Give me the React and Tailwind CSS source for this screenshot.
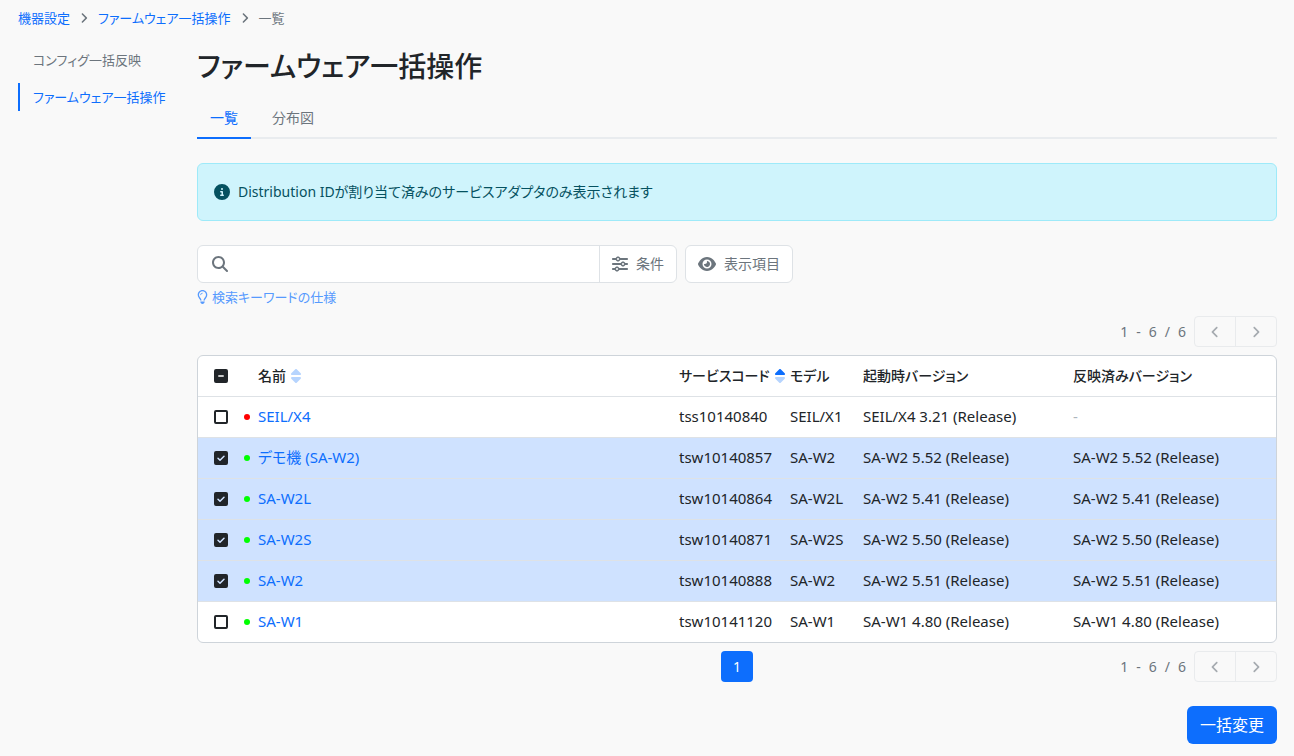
import { useEffect, useRef, useState } from 'react';
import {
  FaAngleLeft,
  FaAngleRight,
  FaCircleInfo,
  FaEye,
  FaMagnifyingGlass,
  FaRegLightbulb,
  FaSliders,
  FaSortDown,
  FaSortUp,
} from 'react-icons/fa6';

const sideNav = [
  { label: 'コンフィグ一括反映', active: false },
  { label: 'ファームウェア一括操作', active: true },
];

const tabs = [
  { label: '一覧', active: true },
  { label: '分布図', active: false },
];

const devices = [
  { name: 'SEIL/X4', code: 'tss10140840', model: 'SEIL/X1', running: 'SEIL/X4 3.21 (Release)', applied: null, online: false },
  { name: 'デモ機 (SA-W2)', code: 'tsw10140857', model: 'SA-W2', running: 'SA-W2 5.52 (Release)', applied: 'SA-W2 5.52 (Release)', online: true },
  { name: 'SA-W2L', code: 'tsw10140864', model: 'SA-W2L', running: 'SA-W2 5.41 (Release)', applied: 'SA-W2 5.41 (Release)', online: true },
  { name: 'SA-W2S', code: 'tsw10140871', model: 'SA-W2S', running: 'SA-W2 5.50 (Release)', applied: 'SA-W2 5.50 (Release)', online: true },
  { name: 'SA-W2', code: 'tsw10140888', model: 'SA-W2', running: 'SA-W2 5.51 (Release)', applied: 'SA-W2 5.51 (Release)', online: true },
  { name: 'SA-W1', code: 'tsw10141120', model: 'SA-W1', running: 'SA-W1 4.80 (Release)', applied: 'SA-W1 4.80 (Release)', online: true },
];

function Checkbox({ checked, indeterminate = false, onChange, label }) {
  const ref = useRef(null);
  useEffect(() => {
    ref.current.indeterminate = indeterminate;
  }, [indeterminate]);

  const filled = checked || indeterminate;
  return (
    <span className="relative block h-3.5 w-3.5">
      <input
        ref={ref}
        type="checkbox"
        aria-label={label}
        checked={checked}
        onChange={onChange}
        className={`block h-3.5 w-3.5 appearance-none rounded-xs border-2 border-[#212529] ${filled ? 'bg-[#212529]' : ''}`}
      />
      {filled && (
        <svg
          viewBox="0 0 14 14"
          fill="none"
          stroke="currentColor"
          strokeWidth="1.5"
          strokeLinecap="round"
          strokeLinejoin="round"
          className={`pointer-events-none absolute inset-0 h-3.5 w-3.5 ${indeterminate ? 'text-white' : 'text-[#cfe2ff]'}`}
        >
          <path d={indeterminate ? 'M4.8 7h4.4' : 'M4 7.2l2 2 4-4'} />
        </svg>
      )}
    </span>
  );
}

function SortButton({ children, direction }) {
  return (
    <button type="button" className="flex items-center gap-1 font-medium whitespace-nowrap">
      {children}
      <span className="relative block h-4 w-3">
        <FaSortUp className={`absolute inset-0 h-4 w-3 ${direction === 'asc' ? 'text-[#0d6efd]' : 'text-[#b6d4fe]'}`} />
        <FaSortDown className="absolute inset-0 h-4 w-3 text-[#b6d4fe]" />
      </span>
    </button>
  );
}

function Pager() {
  return (
    <div className="flex items-center gap-2 text-[#6c757d]">
      <span className="flex gap-2 text-sm">
        <span>1</span>
        <span>-</span>
        <span>6</span>
        <span>/</span>
        <span>6</span>
      </span>
      <div className="flex h-[31px] divide-x divide-[#e9ebed] rounded border border-[#e9ebed] text-[#a6abb0]">
        <button type="button" disabled aria-label="前へ" className="flex w-[41px] items-center justify-center">
          <FaAngleLeft className="h-3.5 w-3.5" />
        </button>
        <button type="button" disabled aria-label="次へ" className="flex w-10 items-center justify-center">
          <FaAngleRight className="h-3.5 w-3.5" />
        </button>
      </div>
    </div>
  );
}

export default function App() {
  const [selected, setSelected] = useState([1, 2, 3, 4]);
  const allSelected = selected.length === devices.length;

  const toggle = (i) =>
    setSelected((prev) => (prev.includes(i) ? prev.filter((n) => n !== i) : [...prev, i]));

  return (
    <div className="min-h-screen bg-[#f9f9f9] pt-2 pr-[17px] pb-3 pl-[18px] font-['Noto_Sans','Noto_Sans_CJK_JP',sans-serif] text-sm text-[#212529] [font-feature-settings:'palt']">
      <nav aria-label="breadcrumb" className="flex h-5 items-center gap-2.5 text-[13px] text-[#6c757d]">
        <a href="#" className="text-[#0d6efd]">機器設定</a>
        <FaAngleRight className="h-3.5 w-2" />
        <a href="#" className="text-[#0d6efd]">ファームウェア一括操作</a>
        <FaAngleRight className="h-3.5 w-2" />
        <span>一覧</span>
      </nav>

      <div className="mt-[18px] flex">
        <nav className="flex w-[179px] shrink-0 flex-col gap-[9px] text-[13px]">
          {sideNav.map(({ label, active }) => (
            <a
              key={label}
              href="#"
              className={`flex h-7 items-center border-l-2 pl-[13px] ${
                active ? 'border-[#0d6efd] text-[#0d6efd]' : 'border-transparent text-[#6c757d]'
              }`}
            >
              {label}
            </a>
          ))}
        </nav>

        <main className="min-w-0 flex-1">
          <h1 className="text-[28px] leading-10 font-medium">ファームウェア一括操作</h1>

          <div className="mt-3 flex gap-2 border-b-2 border-[#e9ecef]">
            {tabs.map(({ label, active }) => (
              <a
                key={label}
                href="#"
                className={`-mb-0.5 flex h-[41px] items-center border-b-2 px-[13px] ${
                  active ? 'border-[#0d6efd] text-[#0d6efd]' : 'border-transparent text-[#6c757d]'
                }`}
              >
                {label}
              </a>
            ))}
          </div>

          <div className="mt-6 flex h-[58px] items-center gap-2 rounded-md border border-[#9eeaf9] bg-[#cff4fc] px-4 text-sm text-[#055160]">
            <FaCircleInfo className="h-4 w-4" />
            Distribution IDが割り当て済みのサービスアダプタのみ表示されます
          </div>

          <div className="mt-6 flex gap-2 text-[#6c757d]">
            <div className="flex h-[38px] w-[480px] rounded-md border border-[#dee2e6] bg-white">
              <label className="flex flex-1 items-center gap-2 pl-3.5">
                <FaMagnifyingGlass className="h-4 w-4" />
                <input type="search" aria-label="検索" className="min-w-0 flex-1 outline-none" />
              </label>
              <button type="button" className="flex items-center gap-2 border-l border-[#dee2e6] px-3">
                <FaSliders className="h-4 w-4" />
                条件
              </button>
            </div>
            <button type="button" className="flex h-[38px] items-center gap-2 rounded-md border border-[#dee2e6] bg-white px-3">
              <FaEye className="h-[18px] w-[18px]" />
              表示項目
            </button>
          </div>

          <a href="#" className="mt-1 flex h-5 w-fit items-center gap-1 text-[13px] text-[#569afe]">
            <FaRegLightbulb className="h-3.5 w-[11px]" />
            検索キーワードの仕様
          </a>

          <div className="mt-[9px] flex justify-end">
            <Pager />
          </div>

          <div className="mt-2 overflow-hidden rounded-md border border-[#ced4da] bg-white">
            <table className="w-full table-fixed text-left text-[15px]">
              <colgroup>
                <col className="w-10" />
                <col className="w-5" />
                <col />
                <col className="w-[111px]" />
                <col className="w-[73px]" />
                <col className="w-[210px]" />
                <col className="w-[203px]" />
              </colgroup>
              <thead>
                <tr className="h-10 border-b border-[#dee2e6] text-sm">
                  <th className="pl-4">
                    <Checkbox
                      label="すべて選択"
                      checked={allSelected}
                      indeterminate={selected.length > 0 && !allSelected}
                      onChange={() => setSelected(allSelected ? [] : devices.map((_, i) => i))}
                    />
                  </th>
                  <td />
                  <th><SortButton>名前</SortButton></th>
                  <th><SortButton direction="asc">サービスコード</SortButton></th>
                  <th className="font-medium">モデル</th>
                  <th className="font-medium">起動時バージョン</th>
                  <th className="font-medium">反映済みバージョン</th>
                </tr>
              </thead>
              <tbody>
                {devices.map((device, i) => (
                  <tr
                    key={device.code}
                    className={`h-[41px] border-b border-[#dee2e6] last:border-b-0 ${
                      selected.includes(i) ? 'bg-[#cfe2ff]' : ''
                    }`}
                  >
                    <td className="pl-4">
                      <Checkbox label={device.name} checked={selected.includes(i)} onChange={() => toggle(i)} />
                    </td>
                    <td className="pl-1.5">
                      <span className={`block h-1.5 w-1.5 rounded-full ${device.online ? 'bg-[#00ff00]' : 'bg-[#ff0000]'}`} />
                    </td>
                    <td><a href="#" className="text-[#0d6efd]">{device.name}</a></td>
                    <td>{device.code}</td>
                    <td>{device.model}</td>
                    <td>{device.running}</td>
                    <td>{device.applied ?? <span className="text-[#adb5bd]">-</span>}</td>
                  </tr>
                ))}
              </tbody>
            </table>
          </div>

          <div className="mt-2 grid grid-cols-[1fr_auto_1fr]">
            <button type="button" aria-current="page" className="col-start-2 h-[31px] w-8 rounded bg-[#0d6efd] text-white">
              1
            </button>
            <div className="flex justify-end">
              <Pager />
            </div>
          </div>

          <div className="mt-6 flex justify-end">
            <button type="button" className="h-[38px] rounded-md bg-[#0d6efd] px-[13px] text-base text-white">
              一括変更
            </button>
          </div>
        </main>
      </div>
    </div>
  );
}
